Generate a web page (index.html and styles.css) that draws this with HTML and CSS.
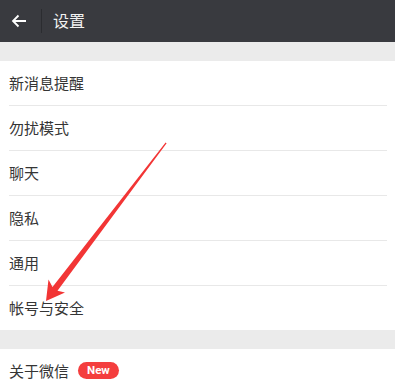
FILE: index.html
```html
<!doctype html>
<html lang="zh-CN">
<head>
<meta charset="utf-8">
<meta name="viewport" content="width=device-width, initial-scale=1">
<title>设置</title>
<link rel="stylesheet" href="styles.css">
</head>
<body>

<header class="topbar">
	<span class="topbar__back">
		<svg width="16" height="14" viewBox="0 0 16 14"><path d="M15 7H2M7.5 1.5L2 7l5.5 5.5" fill="none" stroke="#fff" stroke-width="1.8"/></svg>
	</span>
	<span class="topbar__divider"></span>
	<h1 class="topbar__title">设置</h1>
</header>

<div class="gap"></div>

<ul class="group">
	<li class="row">新消息提醒</li>
	<li class="row">勿扰模式</li>
	<li class="row">聊天</li>
	<li class="row">隐私</li>
	<li class="row">通用</li>
	<li class="row">帐号与安全</li>
</ul>

<div class="gap"></div>

<ul class="group">
	<li class="row">关于微信 <span class="badge">New</span></li>
</ul>

<!-- annotation arrow drawn over the list -->
<svg class="pointer" width="395" height="392" viewBox="0 0 395 392">
	<polygon points="166.6,143.3 57.5,290.8 65,292.5 46,301 48.5,279.5 52.5,287 165.6,142.6" fill="#f23535"/>
</svg>

</body>
</html>
```

FILE: styles.css
```css
body {
	margin: 0;
	padding: 0;
	background: #fff;
	font-family: "Liberation Sans", "Noto Sans CJK SC", sans-serif;
	color: #353535;
	position: relative;
	overflow: hidden;
}

.topbar {
	display: flex;
	align-items: center;
	height: 42px;
	padding-bottom: 3px;
	box-sizing: border-box;
	background: #393a3f;
}

.topbar__back {
	display: flex;
	width: 41px;
	padding: 3px 0 0 11px;
	box-sizing: border-box;
}

.topbar__divider {
	width: 1px;
	height: 24px;
	margin-top: 3px;
	background: #2b2c30;
}

.topbar__title {
	margin: 0 0 0 11px;
	font-size: 16px;
	font-weight: 400;
	color: #f2f2f2;
}

.gap {
	height: 19px;
	background: #ebebeb;
}

.group {
	margin: 0;
	padding: 0;
	list-style: none;
}

.row {
	display: flex;
	align-items: center;
	height: 44px;
	padding-bottom: 2px;
	box-sizing: border-box;
	margin: 0 8px 0 9px;
	font-size: 15px;
	border-bottom: 1px solid #e8e8e8;
}

.row:not(:last-child) {
	height: 45px;
}

.badge {
	display: inline-block;
	margin-left: 9px;
	padding: 0 9px;
	height: 17px;
	line-height: 17px;
	border-radius: 9px;
	background: #f43e3e;
	color: #fff;
	font-family: "Roboto", "Liberation Sans", sans-serif;
	font-size: 11.5px;
	font-weight: 700;
}

.row:last-child {
	border-bottom: 0;
}

.pointer {
	position: absolute;
	top: 0;
	left: 0;
	pointer-events: none;
}
```
